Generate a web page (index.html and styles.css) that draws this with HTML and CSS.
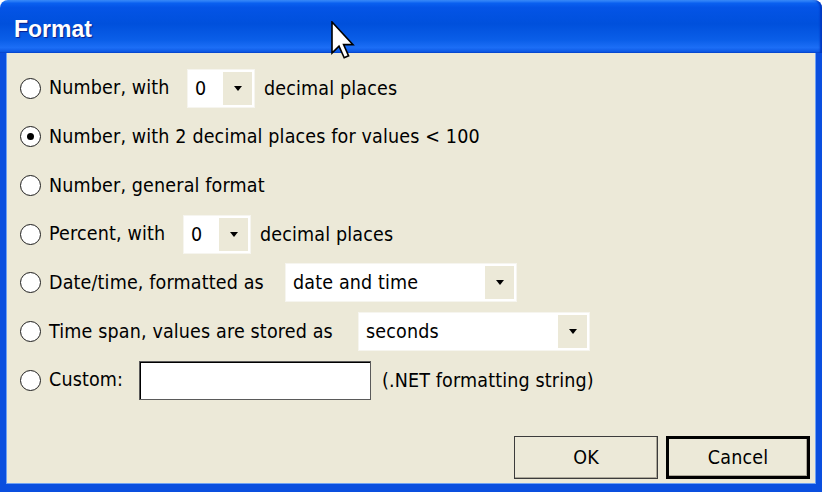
FILE: index.html
```html
<!DOCTYPE html>
<html lang="en">

<head>
  <meta charset="UTF-8">
  <title>Format</title>
  <link rel="stylesheet" href="styles.css">
</head>

<body>
  <div class="window">
    <div class="titlebar">
      <span class="title">Format</span>
    </div>

    <div class="dialog">
      <div class="options">
        <label class="option">
          <span class="radio"></span>
          <span class="label lbl-number">Number, with</span>
          <span class="combo combo-small">
            <span class="combo-value">0</span>
            <span class="combo-button"><span class="arrow"></span></span>
          </span>
          <span class="after">decimal places</span>
        </label>

        <label class="option">
          <span class="radio checked"></span>
          <span class="label">Number, with 2 decimal places for values &lt; 100</span>
        </label>

        <label class="option">
          <span class="radio"></span>
          <span class="label">Number, general format</span>
        </label>

        <label class="option">
          <span class="radio"></span>
          <span class="label lbl-percent">Percent, with</span>
          <span class="combo combo-small">
            <span class="combo-value">0</span>
            <span class="combo-button"><span class="arrow"></span></span>
          </span>
          <span class="after">decimal places</span>
        </label>

        <label class="option">
          <span class="radio"></span>
          <span class="label lbl-date">Date/time, formatted as</span>
          <span class="combo combo-wide">
            <span class="combo-value">date and time</span>
            <span class="combo-button"><span class="arrow"></span></span>
          </span>
        </label>

        <label class="option">
          <span class="radio"></span>
          <span class="label lbl-span">Time span, values are stored as</span>
          <span class="combo combo-wide">
            <span class="combo-value">seconds</span>
            <span class="combo-button"><span class="arrow"></span></span>
          </span>
        </label>

        <label class="option">
          <span class="radio"></span>
          <span class="label lbl-custom">Custom:</span>
          <span class="textbox"></span>
          <span class="after">(.NET formatting string)</span>
        </label>
      </div>

      <div class="buttons">
        <button class="btn">OK</button>
        <button class="btn btn-default">Cancel</button>
      </div>
    </div>

    <!-- mouse pointer sitting over the title bar -->
    <svg class="cursor" width="24" height="38" viewBox="0 0 12 19">
      <path d="M0.5 0.5 L0.5 16 L4 12.6 L6.6 18.4 L8.8 17.4 L6.3 11.8 L11 11.8 Z" fill="#fff" stroke="#000"
        stroke-width="0.8" stroke-linejoin="miter" />
    </svg>
  </div>
</body>

</html>
```

FILE: styles.css
```css
body {
  margin: 0;
  background: #fff;
  font-family: "DejaVu Sans Condensed", "DejaVu Sans", sans-serif;
  font-stretch: condensed;
  font-size: 19.5px;
  letter-spacing: 0.15px;
  color: #000;
}

.window {
  position: relative;
  width: 822px;
  height: 492px;
  display: flex;
  flex-direction: column;
}

.titlebar {
  height: 53px;
  flex: none;
  border-radius: 8px 8px 0 0;
  background: linear-gradient(to bottom, #3d8ffb 0%, #0a60f0 6%, #0454e6 14%, #0050dc 45%, #0a5ee8 75%, #1c6ef6 90%, #0d5ae6 97%, #0440c8 100%);
  box-shadow: inset -3px 0 2px -1px #0038c0;
  display: flex;
  align-items: center;
  padding-left: 14px;
  padding-top: 6px;
  box-sizing: border-box;
}

.title {
  font-family: "Liberation Sans", Arial, sans-serif;
  font-stretch: normal;
  letter-spacing: 0;
  font-weight: bold;
  font-size: 23px;
  color: #fff;
  text-shadow: 1px 1px 1px #0a1e8c;
}

.dialog {
  flex: 1;
  display: flex;
  flex-direction: column;
  background: #ece9d8;
  border: 6px solid #0a4fdf;
  border-top: none;
  border-bottom-width: 8px;
  box-shadow: inset 1px 0 #6fa2f4, inset -1px 0 #6fa2f4, inset 0 -1px #6fa2f4;
}

.options {
  padding-top: 11px;
}

.option {
  display: flex;
  align-items: center;
  height: 48.67px;
  padding-left: 14px;
}

.radio {
  width: 21px;
  height: 21px;
  box-sizing: border-box;
  border: 1.6px solid #1e1e1e;
  border-radius: 50%;
  background: #fff;
  flex: none;
  margin-right: 8px;
  display: flex;
  align-items: center;
  justify-content: center;
}

.radio.checked::after {
  content: '';
  width: 7px;
  height: 7px;
  border-radius: 50%;
  background: #000;
}

.label {
  white-space: nowrap;
  padding-bottom: 1px;
}

.lbl-number {
  width: 138px;
}

.lbl-percent {
  width: 134px;
}

.lbl-date {
  width: 236px;
}

.lbl-span {
  width: 309px;
}

.lbl-custom {
  width: 90px;
}

.after {
  margin-left: 9px;
  white-space: nowrap;
}

.combo {
  display: flex;
  align-items: stretch;
  height: 39px;
  box-sizing: border-box;
  background: #fff;
  border: 1px solid #f6f5ef;
  padding: 2px;
}

.combo-small {
  width: 68px;
}

.combo-wide {
  width: 232px;
}

.combo-value {
  flex: 1;
  display: flex;
  align-items: center;
  padding-left: 5px;
}

.combo-button {
  width: 29px;
  background: #ece9d8;
  display: flex;
  align-items: center;
  justify-content: center;
}

.arrow {
  width: 0;
  height: 0;
  border-left: 4px solid transparent;
  border-right: 4px solid transparent;
  border-top: 5px solid #000;
}

.textbox {
  width: 232px;
  height: 39px;
  box-sizing: border-box;
  background: #fff;
  border: 1px solid #5a5a5a;
  box-shadow: inset 1px 1px #000;
  margin-right: 2px;
}

.buttons {
  margin-top: auto;
  display: flex;
  justify-content: flex-end;
  gap: 8px;
  padding: 0 6px 5px 0;
}

.btn {
  width: 144px;
  height: 43px;
  background: #ece9d8;
  border: 1px solid #3c3c3c;
  box-shadow: inset -1px -1px #aca899;
  font-family: inherit;
  font-stretch: condensed;
  letter-spacing: inherit;
  font-size: 19.5px;
  color: #000;
  padding: 0;
}

.btn-default {
  border: 3px solid #000;
}

.cursor {
  position: absolute;
  left: 331px;
  top: 21px;
}
```
